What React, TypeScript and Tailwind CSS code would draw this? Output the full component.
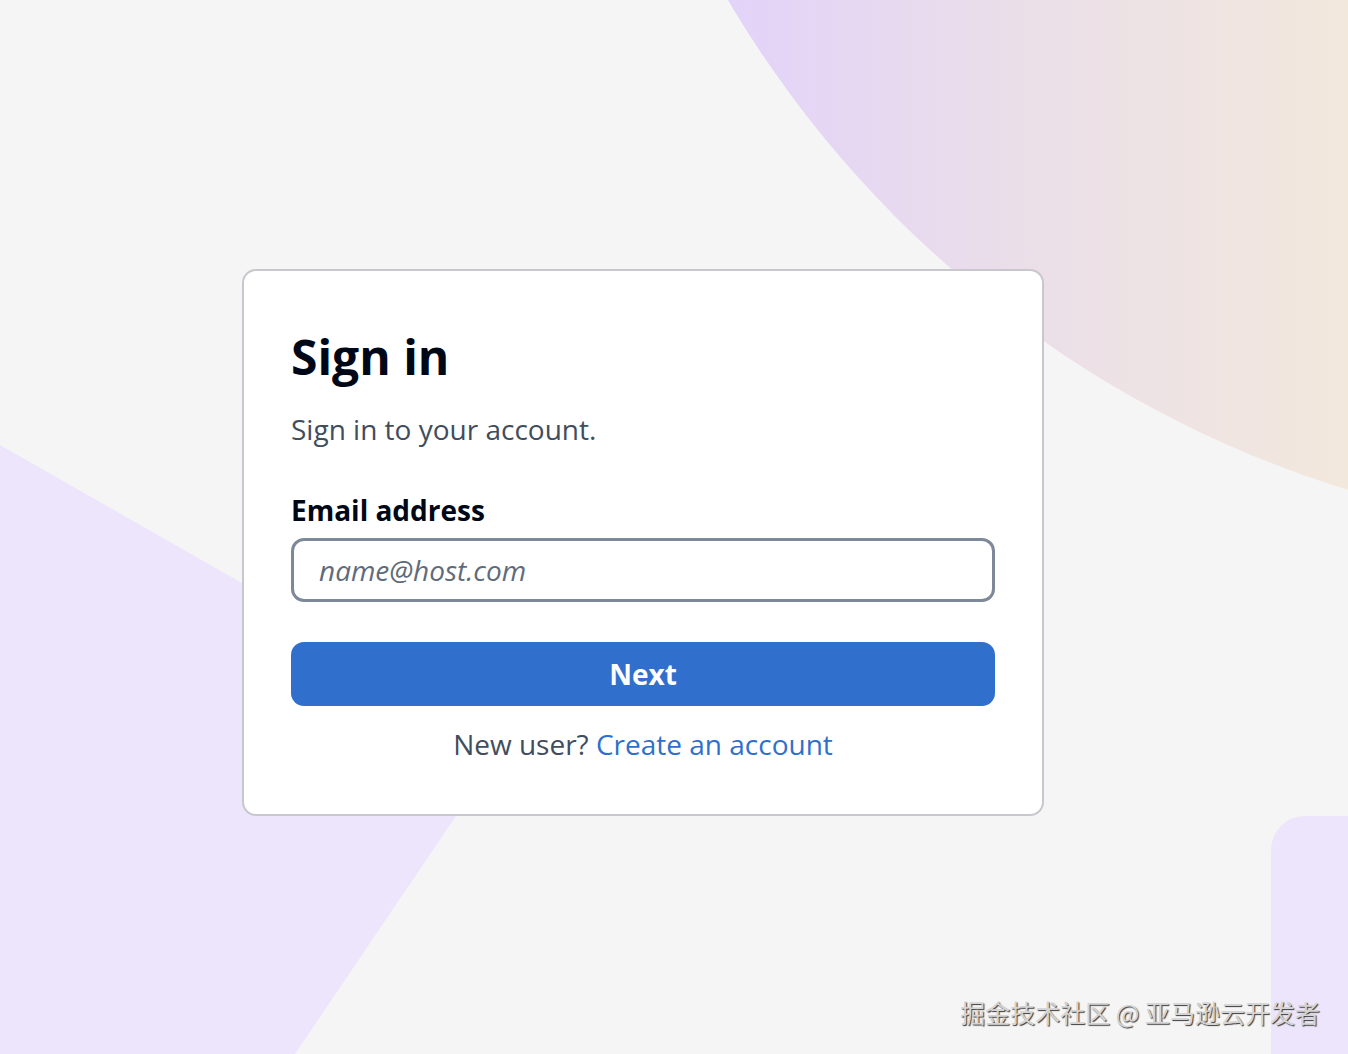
export default function App() {
  return (
    <div className="relative min-h-screen w-full overflow-hidden bg-[#f5f5f5] font-['Open_Sans','Noto_Sans',sans-serif]">
      {/* Decorative background shapes */}
      <svg
        className="pointer-events-none absolute inset-0"
        width="1348"
        height="1054"
        viewBox="0 0 1348 1054"
        aria-hidden="true"
      >
        <defs>
          <linearGradient id="blob" gradientUnits="userSpaceOnUse" x1="728" y1="0" x2="1348" y2="0">
            <stop offset="0" stopColor="#e2d3f9" />
            <stop offset="0.5" stopColor="#ebdfe8" />
            <stop offset="1" stopColor="#f2e8dc" />
          </linearGradient>
        </defs>
        <circle cx="1669" cy="-554" r="1092" fill="url(#blob)" />
        <polygon points="0,445 510,736 295,1054 0,1054" fill="#ede5fb" />
        <rect x="1271" y="816" width="200" height="320" rx="34" fill="#ece5fb" />
      </svg>

      <div className="relative pl-[242px] pt-[269px]">
        <div className="w-[802px] rounded-[14px] border-2 border-[#c7c7cd] bg-white px-[47px] pt-[56px] pb-[52px]">
          <h1 className="text-[48px] font-bold leading-[60px] text-[#000716]">Sign in</h1>
          <p className="mt-[24px] text-[28px] leading-[36px] text-[#414d5c]">Sign in to your account.</p>

          <label className="mt-[45px] block text-[28px] font-bold leading-[36px] text-[#000716]">
            Email address
          </label>
          <input
            type="email"
            placeholder="name@host.com"
            className="mt-[10px] block h-[64px] w-full rounded-[13px] border-[3px] border-[#7d8998] bg-white px-[25px] text-[28px] text-[#000716] outline-none placeholder:italic placeholder:text-[#5f6b7a]"
          />

          <button className="mt-[40px] flex h-[64px] w-full items-center justify-center rounded-[13px] bg-[#306fcc] text-[28px] font-bold text-white">
            Next
          </button>

          <p className="mt-[20px] text-center text-[28px] leading-[36px] text-[#414d5c]">
            New user? <a className="text-[#3070cc]">Create an account</a>
          </p>
        </div>
      </div>

      {/* Watermark */}
      <div className="absolute right-[28px] bottom-[26px] font-['Noto_Sans_CJK_SC',sans-serif] text-[25px] leading-[32px] text-[#d4d4d4] [text-shadow:1px_1px_1px_#3a3a3a]">
        掘金技术社区 @ 亚马逊云开发者
      </div>
    </div>
  );
}
